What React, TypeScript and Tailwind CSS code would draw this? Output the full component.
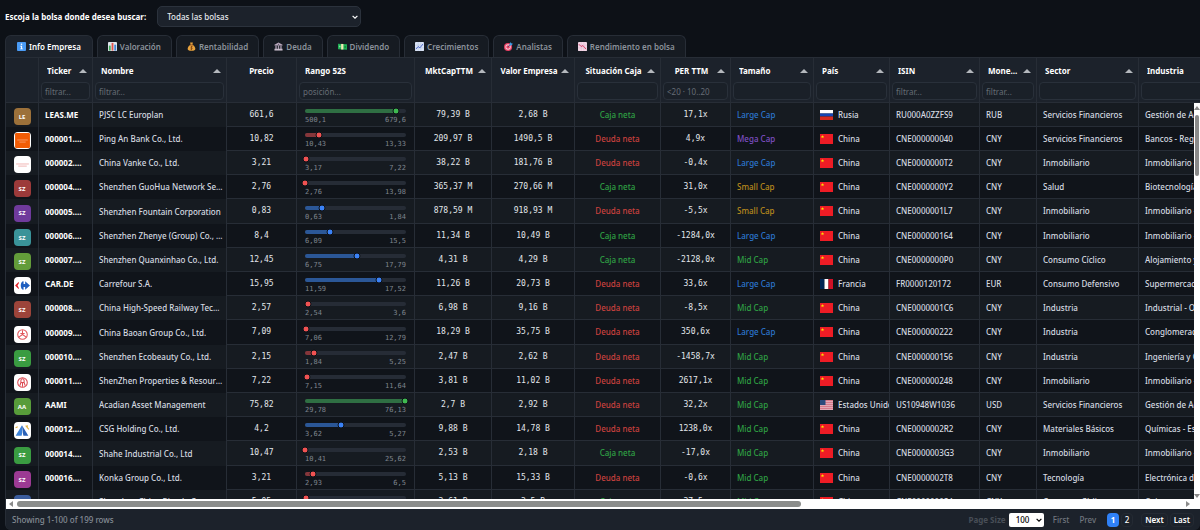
import type { ReactNode } from 'react'

const tabs: { label: string; icon: ReactNode }[] = [
  {
    label: 'Info Empresa',
    icon: (
      <>
        <rect width="20" height="20" rx="2" fill="#4a9bf5" />
        <circle cx="10" cy="5" r="1.8" fill="#fff" />
        <path d="M7.5 8.5h3.8v6h1.8v1.8H7.2v-1.8H9v-4.2H7.5z" fill="#fff" />
      </>
    ),
  },
  {
    label: 'Valoración',
    icon: (
      <>
        <rect width="20" height="20" rx="1" fill="#dfe5ec" />
        <path d="M2 8h4v11H2z" fill="#3fae5a" />
        <path d="M8 2h4v17H8z" fill="#e2524b" />
        <path d="M14 6h4v13h-4z" fill="#3f86d8" />
      </>
    ),
  },
  {
    label: 'Rentabilidad',
    icon: (
      <>
        <path d="M7 1h6l-1 5c4 2 6.5 6 6.5 9 0 3-2.5 4.5-8.5 4.5S1.5 18 1.5 15C1.5 12 4 8 8 6z" fill="#e8a33d" />
        <path d="M6.5 5.5h7v2h-7z" fill="#8a4b1c" />
        <path d="M12.5 10.5c-4-1.5-5.5 1.5-2.5 2.5s2 4-2.5 2.5M10 9v9" fill="none" stroke="#7a3f12" strokeWidth="1.6" />
      </>
    ),
  },
  {
    label: 'Deuda',
    icon: (
      <>
        <path d="M10 1l9 5v2H1V6z" fill="#b9a9bd" />
        <path d="M3 8h3v8H3zM8.5 8h3v8h-3zM14 8h3v8h-3z" fill="#a99bb0" />
        <path d="M1 15h18v4H1z" fill="#c8bccb" />
        <circle cx="10" cy="5" r="1.3" fill="#4b4356" />
      </>
    ),
  },
  {
    label: 'Dividendo',
    icon: (
      <>
        <path d="M0 4l20 1v12L0 16z" fill="#1fae54" />
        <path d="M7 4.3h5v12.4H7z" fill="#f2e9b5" />
        <circle cx="4" cy="10" r="2" fill="#7ee09b" />
        <circle cx="16" cy="11" r="2" fill="#0d7f38" />
      </>
    ),
  },
  {
    label: 'Crecimientos',
    icon: (
      <>
        <rect width="20" height="20" rx="1" fill="#dbe4f5" />
        <path d="M0 7h20M0 13h20M7 0v20M13 0v20" stroke="#a9bce0" />
        <path d="M2 16l5-6 4 3 7-9" fill="none" stroke="#4b63c9" strokeWidth="2" />
      </>
    ),
  },
  {
    label: 'Analistas',
    icon: (
      <>
        <circle cx="9" cy="11" r="9" fill="#e63e62" />
        <circle cx="9" cy="11" r="6" fill="#f6d5dd" />
        <circle cx="9" cy="11" r="4" fill="#e63e62" />
        <path d="M9 11l6-6" stroke="#28405c" strokeWidth="1.5" />
        <path d="M12 5l3-5 1 3 4 1-4 4-4 0z" fill="#3d9be8" />
      </>
    ),
  },
  {
    label: 'Rendimiento en bolsa',
    icon: (
      <>
        <rect width="20" height="20" rx="1" fill="#f3d7e6" />
        <path d="M0 7h20M0 13h20M7 0v20M13 0v20" stroke="#dfb0cd" />
        <path d="M2 5l5 5 4-2 7 8" fill="none" stroke="#d8365c" strokeWidth="2" />
      </>
    ),
  },
]

type Column = {
  title: string
  width: string
  align?: 'center'
  sort?: boolean
  filter?: string
}

// filter: undefined = no filter box, '' = box without placeholder
const columns: Column[] = [
  { title: '', width: 'w-[33px]' },
  { title: 'Ticker', width: 'w-[54px]', sort: true, filter: 'filtrar...' },
  { title: 'Nombre', width: 'w-[134px]', sort: true, filter: 'filtrar...' },
  { title: 'Precio', width: 'w-[70px]', align: 'center' },
  { title: 'Rango 52S', width: 'w-[118px]', filter: 'posición...' },
  { title: 'MktCapTTM', width: 'w-[77px]', align: 'center', sort: true },
  { title: 'Valor Empresa', width: 'w-[83px]', align: 'center', sort: true },
  { title: 'Situación Caja', width: 'w-[86px]', align: 'center', sort: true, filter: '' },
  { title: 'PER TTM', width: 'w-[70px]', align: 'center', sort: true, filter: '<20 · 10..20' },
  { title: 'Tamaño', width: 'w-[83px]', sort: true, filter: '' },
  { title: 'País', width: 'w-[76px]', sort: true, filter: '' },
  { title: 'ISIN', width: 'w-[90px]', sort: true, filter: 'filtrar...' },
  { title: 'Moneda', width: 'w-[57px]', sort: true, filter: 'filtrar...' },
  { title: 'Sector', width: 'w-[102px]', sort: true, filter: '' },
  { title: 'Industria', width: 'w-[130px]', sort: true, filter: '' },
]

type Row = [
  logo: string,
  ticker: string,
  name: string,
  price: string,
  low: string,
  high: string,
  mktCap: string,
  ev: string,
  cash: 'Caja neta' | 'Deuda neta',
  per: string,
  size: string,
  country: string,
  isin: string,
  currency: string,
  sector: string,
  industry: string,
]

const rows: Row[] = [
  ['LE bg-[#9c713a]', 'LEAS.ME', 'PJSC LC Europlan', '661,6', '500,1', '679,6', '79,39 B', '2,68 B', 'Caja neta', '17,1x', 'Large Cap', 'Rusia', 'RU000A0ZZFS9', 'RUB', 'Servicios Financieros', 'Gestión de Activos'],
  ['pingan', '000001.SHE', 'Ping An Bank Co., Ltd.', '10,82', '10,43', '13,33', '209,97 B', '1490,5 B', 'Deuda neta', '4,9x', 'Mega Cap', 'China', 'CNE000000040', 'CNY', 'Servicios Financieros', 'Bancos - Regionales'],
  ['vanke', '000002.SHE', 'China Vanke Co., Ltd.', '3,21', '3,17', '7,22', '38,22 B', '181,76 B', 'Deuda neta', '-0,4x', 'Large Cap', 'China', 'CNE0000000T2', 'CNY', 'Inmobiliario', 'Inmobiliario - Desarrollo'],
  ['SZ bg-[#9c3a3a]', '000004.SHE', 'Shenzhen GuoHua Network Security', '2,76', '2,76', '13,98', '365,37 M', '270,66 M', 'Caja neta', '31,0x', 'Small Cap', 'China', 'CNE0000000Y2', 'CNY', 'Salud', 'Biotecnología'],
  ['SZ bg-[#6f3a9c]', '000005.SHE', 'Shenzhen Fountain Corporation', '0,83', '0,63', '1,84', '878,59 M', '918,93 M', 'Deuda neta', '-5,5x', 'Small Cap', 'China', 'CNE0000001L7', 'CNY', 'Inmobiliario', 'Inmobiliario - Desarrollo'],
  ['SZ bg-[#3a9399]', '000006.SHE', 'Shenzhen Zhenye (Group) Co., Ltd.', '8,4', '6,09', '15,5', '11,34 B', '10,49 B', 'Caja neta', '-1284,0x', 'Large Cap', 'China', 'CNE000000164', 'CNY', 'Inmobiliario', 'Inmobiliario - Desarrollo'],
  ['SZ bg-[#639c3a]', '000007.SHE', 'Shenzhen Quanxinhao Co., Ltd.', '12,45', '6,75', '17,79', '4,31 B', '4,29 B', 'Caja neta', '-2128,0x', 'Mid Cap', 'China', 'CNE0000000P0', 'CNY', 'Consumo Cíclico', 'Alojamiento y Hoteles'],
  ['carrefour', 'CAR.DE', 'Carrefour S.A.', '15,95', '11,59', '17,52', '11,26 B', '20,73 B', 'Deuda neta', '33,6x', 'Large Cap', 'Francia', 'FR0000120172', 'EUR', 'Consumo Defensivo', 'Supermercados'],
  ['SZ bg-[#9c443a]', '000008.SHE', 'China High-Speed Railway Technology', '2,57', '2,54', '3,6', '6,98 B', '9,16 B', 'Deuda neta', '-8,5x', 'Mid Cap', 'China', 'CNE0000001C6', 'CNY', 'Industria', 'Industrial - Operaciones'],
  ['baoan', '000009.SHE', 'China Baoan Group Co., Ltd.', '7,09', '7,06', '12,79', '18,29 B', '35,75 B', 'Deuda neta', '350,6x', 'Large Cap', 'China', 'CNE000000222', 'CNY', 'Industria', 'Conglomerados'],
  ['SZ bg-[#3a9c41]', '000010.SHE', 'Shenzhen Ecobeauty Co., Ltd.', '2,15', '1,84', '5,25', '2,47 B', '2,62 B', 'Deuda neta', '-1458,7x', 'Mid Cap', 'China', 'CNE000000156', 'CNY', 'Industria', 'Ingeniería y Construcción'],
  ['properties', '000011.SHE', 'ShenZhen Properties & Resources', '7,22', '7,15', '11,64', '3,81 B', '11,02 B', 'Deuda neta', '2617,1x', 'Mid Cap', 'China', 'CNE000000248', 'CNY', 'Inmobiliario', 'Inmobiliario - Desarrollo'],
  ['AA bg-[#589c3a]', 'AAMI', 'Acadian Asset Management', '75,82', '29,78', '76,13', '2,7 B', '2,92 B', 'Deuda neta', '32,2x', 'Mid Cap', 'Estados Unidos', 'US10948W1036', 'USD', 'Servicios Financieros', 'Gestión de Activos'],
  ['csg', '000012.SHE', 'CSG Holding Co., Ltd.', '4,2', '3,62', '5,27', '9,88 B', '14,78 B', 'Deuda neta', '1238,0x', 'Mid Cap', 'China', 'CNE0000002R2', 'CNY', 'Materiales Básicos', 'Químicas - Especialidad'],
  ['SZ bg-[#3a9c41]', '000014.SHE', 'Shahe Industrial Co., Ltd', '10,47', '10,41', '25,62', '2,53 B', '2,18 B', 'Caja neta', '-17,0x', 'Mid Cap', 'China', 'CNE0000003G3', 'CNY', 'Inmobiliario', 'Inmobiliario - Desarrollo'],
  ['SZ bg-[#9c3a93]', '000016.SHE', 'Konka Group Co., Ltd.', '3,21', '2,93', '6,5', '5,13 B', '15,33 B', 'Deuda neta', '-0,6x', 'Mid Cap', 'China', 'CNE0000002T8', 'CNY', 'Tecnología', 'Electrónica de Consumo'],
  ['SZ bg-[#3a5c9c]', '000017.SHE', 'Shenzhen China Bicycle Co.', '5,05', '5,01', '9,1', '3,61 B', '3,5 B', 'Caja neta', '37,5x', 'Mid Cap', 'China', 'CNE0000000S4', 'CNY', 'Consumo Cíclico', 'Ocio'],
]

const sizeColors: Record<string, string> = {
  'Large Cap': 'text-[#2c76cf]',
  'Mega Cap': 'text-[#7f4fc4]',
  'Small Cap': 'text-[#b98a1c]',
  'Mid Cap': 'text-[#2fa044]',
}

const drawnLogos: Record<string, ReactNode> = {
  pingan: (
    <>
      <rect x="1" y="1" width="14" height="14" rx="1" fill="#f25c05" />
      <path d="M3 7.5h10M5 9.5h6" stroke="#f9a070" strokeWidth="0.8" />
    </>
  ),
  vanke: <path d="M2 7.5h12M4 9.5h8" stroke="#eeaaa9" strokeWidth="0.8" />,
  carrefour: (
    <>
      <path d="M4.5 4.5L1 8l3.5 3.5V10L3.3 8l1.2-2z" fill="#e1242a" />
      <path d="M9 4C5.5 4 5.5 12 9 12v-2.5h1.5V12L15 8l-4.5-4v2.5H9z" fill="#1f5fc0" />
    </>
  ),
  baoan: (
    <g fill="none" stroke="#e0565b">
      <circle cx="8" cy="8" r="4.5" />
      <path d="M8 4v4M8 8l-3.5 2.5M8 8l3.5 2.5M6 7h4" />
    </g>
  ),
  properties: (
    <g fill="none" stroke="#dc4a52">
      <circle cx="8" cy="8" r="4.5" />
      <path d="M6.5 6a1.5 1.5 0 013 0v2h-3zM5.5 11l1-3M10.5 11l-1-3M8 8v4" />
    </g>
  ),
  csg: (
    <>
      <path d="M7.5 3l6 10H8.5z" fill="#2b62b8" />
      <path d="M7.5 3v10h-6z" fill="#3d83d8" />
      <path d="M7 13l1-3 1 3z" fill="#fff" />
      <path d="M1.5 5.5l2-1M11 3.5l3 3.5M12.5 3v2" stroke="#e3b341" />
    </>
  ),
}

function Logo({ id }: { id: string }) {
  if (drawnLogos[id]) {
    return (
      <svg viewBox="0 0 16 16" className="mx-auto block size-[17px] rounded-[4px] bg-white">
        {drawnLogos[id]}
      </svg>
    )
  }
  const [text, color] = id.split(' ')
  return (
    <span className={`mx-auto flex size-[17px] items-center justify-center rounded-[4px] text-[6px] font-bold text-white ${color}`}>
      {text}
    </span>
  )
}

function Flag({ country }: { country: string }) {
  return (
    <svg viewBox="0 0 26 20" className="h-[10px] w-[13px] shrink-0">
      {country === 'China' && (
        <>
          <rect width="26" height="20" fill="#ee1c25" />
          <path d="M5 2l1 2.5h2.5l-2 1.5.8 2.5L5 7 2.7 8.5l.8-2.5-2-1.5H4z" fill="#ffde00" />
        </>
      )}
      {country === 'Rusia' && (
        <>
          <rect width="26" height="7" fill="#fff" />
          <rect y="7" width="26" height="6" fill="#1546b5" />
          <rect y="13" width="26" height="7" fill="#d52b1e" />
        </>
      )}
      {country === 'Francia' && (
        <>
          <rect width="9" height="20" fill="#002654" />
          <rect x="9" width="8" height="20" fill="#fff" />
          <rect x="17" width="9" height="20" fill="#ce1126" />
        </>
      )}
      {country === 'Estados Unidos' && (
        <>
          <rect width="26" height="20" fill="#e3a9b6" />
          <path d="M0 1h26M0 5h26M0 9h26M0 13h26M0 17h26" stroke="#cf5a70" strokeWidth="1.2" />
          <rect width="11" height="10" fill="#2c4a7c" />
        </>
      )}
    </svg>
  )
}

const toNumber = (value: string) => Number(value.replace(',', '.'))

function RangeBar({ price, low, high }: { price: string; low: string; high: string }) {
  const position = ((toNumber(price) - toNumber(low)) / (toNumber(high) - toNumber(low))) * 100
  let fill = 'bg-[#2b5797]'
  let dot = 'bg-[#3b82f6]'
  if (position > 80) {
    fill = 'bg-[#2f6f43]'
    dot = 'bg-[#3fb950]'
  } else if (position < 15) {
    fill = 'bg-[#86363a]'
    dot = 'bg-[#f05252]'
  }
  return (
    <div className="px-2 pt-1">
      <div className="relative h-1 rounded-full bg-[#262c36]">
        <div className={`h-1 rounded-full ${fill}`} style={{ width: `${position}%` }} />
        <span
          className={`absolute top-1/2 size-[7px] -translate-1/2 rounded-full border border-[#0d1117] ${dot}`}
          style={{ left: `${position}%` }}
        />
      </div>
      <div className="flex justify-between pt-[3px] font-['DejaVu_Sans_Mono',monospace] text-[7px] leading-[8px] font-normal text-[#7f858e]">
        <span>{low}</span>
        <span>{high}</span>
      </div>
    </div>
  )
}

const cell = 'overflow-hidden border-r border-[#272d36] p-0'
const line = 'border-b border-b-[#272d36]'
const mono = "text-center font-['DejaVu_Sans_Mono',monospace] font-normal text-[#e3e7eb]"

export default function App() {
  return (
    <div className="flex h-screen flex-col overflow-hidden bg-[#0d1117] pl-[5px] font-['Noto_Sans',sans-serif] text-[8px] leading-[12px] text-[#d5dae0]">
      <div className="flex items-center gap-[11px] pt-[6px] pb-2">
        <label htmlFor="bolsa" className="font-bold text-white">
          Escoja la bolsa donde desea buscar:
        </label>
        <div className="relative">
          <select
            id="bolsa"
            className="block h-[21px] w-[204px] appearance-none rounded-[5px] border border-[#2b323c] bg-[#1c222b] px-[9px] font-medium text-[#e6e9ed]"
          >
            <option>Todas las bolsas</option>
          </select>
          <svg viewBox="0 0 10 10" className="pointer-events-none absolute top-2 right-[3px] size-[6px]">
            <path d="M1 3l4 4 4-4" fill="none" stroke="#fff" strokeWidth="2" />
          </svg>
        </div>
      </div>

      <nav className="flex gap-1">
        {tabs.map((tab, i) => (
          <button
            key={tab.label}
            className={`flex h-[22px] items-center gap-[3px] rounded-t-[6px] border border-b-0 border-[#272d36] font-semibold ${
              i === 0 ? 'bg-[#1c222b] px-[11px] text-white' : 'bg-[#161b22] px-[10px] text-[#8b929b]'
            }`}
          >
            <svg viewBox="0 0 20 20" className="size-[9px]">
              {tab.icon}
            </svg>
            {tab.label}
          </button>
        ))}
      </nav>

      <div className="flex min-h-0 flex-1 flex-col overflow-hidden rounded-b-[6px] border-l border-[#272d36] bg-[#1c222b]">
        <div className="relative min-h-0 flex-1 overflow-hidden">
          <table className="w-[1263px] table-fixed border-separate border-spacing-0">
            <thead>
              <tr className="h-[46px] bg-[#1c222b]">
                {columns.map((col) => (
                  <th key={col.title} className={`${col.width} border-t border-r border-b border-[#272d36] p-0 align-top`}>
                    <div
                      className={`relative mt-[7px] h-3 pl-2 font-bold text-white ${col.sort ? 'pr-4' : 'pr-2'} ${
                        col.align === 'center' ? 'text-center' : 'text-left'
                      }`}
                    >
                      <div className="truncate">{col.title}</div>
                      {col.sort && (
                        <span className="absolute top-1 right-[5px] border-x-[4px] border-b-[4px] border-x-transparent border-b-[#b4b8bd]" />
                      )}
                    </div>
                    {col.filter !== undefined && (
                      <input
                        aria-label={`Filtrar ${col.title}`}
                        placeholder={col.filter}
                        className="mx-[2px] mt-[5px] block h-[18px] w-[calc(100%-4px)] rounded-[4px] border border-[#29303a] bg-[#1a2028] px-[3px] font-normal placeholder:text-[#666c75]"
                      />
                    )}
                  </th>
                ))}
              </tr>
            </thead>
            <tbody className="font-medium whitespace-nowrap">
              {rows.map(([logo, ticker, name, price, low, high, mktCap, ev, cash, per, size, country, isin, currency, sector, industry]) => (
                <tr key={ticker} className="h-6 odd:bg-[#161b21] even:bg-[#10141a] nth-[5n]:h-[25px]">
                  <td className={`${cell} pt-[3px]`}>
                    <Logo id={logo} />
                  </td>
                  <td className={`${cell} pr-[9px] pl-[6px] font-bold text-white`}>
                    <div className="truncate">{ticker}</div>
                  </td>
                  <td className={`${cell} pr-[2px] pl-[6px]`}>
                    <div className="truncate">{name}</div>
                  </td>
                  <td className={`${cell} ${line} ${mono}`}>{price}</td>
                  <td className={`${cell} ${line}`}>
                    <RangeBar price={price} low={low} high={high} />
                  </td>
                  <td className={`${cell} ${line} ${mono}`}>{mktCap}</td>
                  <td className={`${cell} ${line} ${mono}`}>{ev}</td>
                  <td className={`${cell} ${line} text-center ${cash === 'Caja neta' ? 'text-[#2fa044]' : 'text-[#cb413e]'}`}>
                    {cash}
                  </td>
                  <td className={`${cell} ${line} ${mono}`}>{per}</td>
                  <td className={`${cell} ${line} px-[6px] ${sizeColors[size]}`}>{size}</td>
                  <td className={`${cell} ${line} pl-[6px]`}>
                    <div className="flex items-center gap-[5px]">
                      <Flag country={country} />
                      {country}
                    </div>
                  </td>
                  <td className={`${cell} ${line} px-[6px]`}>{isin}</td>
                  <td className={`${cell} ${line} px-[6px]`}>{currency}</td>
                  <td className={`${cell} ${line} px-[6px]`}>{sector}</td>
                  <td className={`${cell} ${line} px-[6px]`}>{industry}</td>
                </tr>
              ))}
            </tbody>
          </table>

          {/* vertical scrollbar, starts below the header */}
          <div className="absolute top-[46px] right-0 bottom-0 flex w-[6px] flex-col items-center justify-between bg-white pt-[3px]">
            <div className="flex w-full flex-col items-center gap-[5px]">
              <span className="border-x-[3px] border-b-[4px] border-x-transparent border-b-[#8b8b8b]" />
              <span className="h-[61px] w-1 rounded-full bg-[#8b8b8b]" />
            </div>
            <span className="mb-[1px] border-x-[3px] border-t-[4px] border-x-transparent border-t-[#8b8b8b]" />
          </div>
        </div>

        <div className="flex h-[10px] shrink-0 items-center gap-1 bg-white px-[3px]">
          <span className="border-y-[3px] border-r-[4px] border-y-transparent border-r-[#8b8b8b]" />
          <span className="h-[6px] w-[66%] rounded-full bg-[#8b8d8b]" />
          <span className="mr-[7px] ml-auto border-y-[3px] border-l-[4px] border-y-transparent border-l-[#8b8b8b]" />
        </div>

        <footer className="flex h-[21px] shrink-0 items-center bg-[#1c222b] px-[6px] font-medium">
          <span className="text-[#858c95]">Showing 1-100 of 199 rows</span>
          <div className="ml-auto flex items-center">
            <label htmlFor="page-size" className="mr-[3px] font-bold text-[#484e57]">
              Page Size
            </label>
            <div className="relative mr-[5px]">
              <select id="page-size" className="block h-[14px] w-[35px] appearance-none rounded-[2px] bg-white pl-[7px] text-black">
                <option>100</option>
              </select>
              <svg viewBox="0 0 10 10" className="pointer-events-none absolute top-1 right-[2px] size-[6px]">
                <path d="M1 3l4 4 4-4" fill="none" stroke="#000" strokeWidth="2" />
              </svg>
            </div>
            <button disabled className="mr-[2px] h-[14px] px-1 text-[#70767f]">First</button>
            <button disabled className="mr-[7px] h-[14px] px-1 text-[#70767f]">Prev</button>
            <button className="mr-[2px] h-[14px] w-3 rounded-[4px] bg-[#2f81f7] text-center font-bold text-white">1</button>
            <button className="mr-[8px] h-[14px] w-3 rounded-[4px] border border-[#242a33] text-center text-white">2</button>
            <button className="mr-[2px] h-[14px] rounded-[4px] border border-[#242a33] px-[3px] font-semibold text-white">Next</button>
            <button className="h-[14px] rounded-[4px] border border-[#242a33] px-[3px] font-semibold text-white">Last</button>
          </div>
        </footer>
      </div>
    </div>
  )
}
